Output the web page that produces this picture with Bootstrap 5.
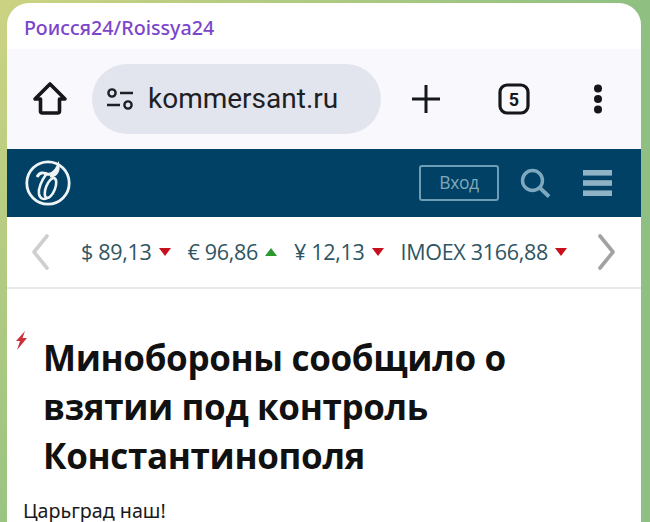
<!DOCTYPE html>
<html lang="en">
<head>
  <meta charset="UTF-8" />
  <title>Роисся24/Roissya24</title>
  <link href="https://cdn.jsdelivr.net/npm/bootstrap@5.3.2/dist/css/bootstrap.min.css" rel="stylesheet" />
  <style>
    html, body { height: 522px; overflow: hidden; }
    body {
      background: linear-gradient(135deg, #ccd382 0%, #8fc082 55%, #8fc083 100%);
      font-family: "Open Sans", sans-serif;
      padding: 3px 9px 0 7px;
    }
    .post-box { background: #fff; border-radius: 22px 22px 0 0; height: 560px; overflow: hidden; }
    .post-author { height: 46px; padding: 0 0 0 17px; font: 500 19.7px/50px "Noto Sans", sans-serif; color: #7c46cc; }
    .browser-bar { height: 100px; background: #f8f8fd; padding: 0 0 0 25px; }
    .url-pill { width: 289px; height: 70px; margin-left: 24px; border-radius: 35px; background: #e2e5ee; padding-left: 14px; gap: 14px; font: 400 28px/1 Roboto, sans-serif; color: #1d2024; }
    .plus-icon { margin-left: 30px; }
    .tabs-icon { margin-left: 57px; }
    .dots-icon { margin-left: 63px; }
    .site-head { height: 68px; background: #004165; padding: 0 29px 0 18px; }
    .login-box { width: 80px; height: 36px; border: 2px solid #6e9db6; border-radius: 3px; color: #7ea8be; font-size: 17.5px; letter-spacing: -.4px; line-height: 1; }
    .search-icon { margin-left: 21px; }
    .burger-icon { margin-left: 33px; }
    .ticker { height: 72px; border-bottom: 2px solid #e9e9e9; padding: 0 25px; color: #2f5563; font-size: 21.5px; letter-spacing: -.3px; white-space: nowrap; }
    .rate-list { gap: 17px; margin-left: 32px; }
    .rate-item { gap: 7px; }
    .arrow-down { width: 0; height: 0; border: 6px solid transparent; border-top: 8px solid #c8101c; border-bottom: 0; }
    .arrow-up { width: 0; height: 0; border: 6px solid transparent; border-bottom: 8px solid #2a9a2e; border-top: 0; }
    .next-arrow { margin-left: 31px; }
    .news-row { padding: 42px 0 0 8px; }
    .news-title { margin: 2px 0 0 15px; width: 530px; font: 700 35px/49px "Open Sans", sans-serif; color: #111; letter-spacing: -.35px; }
    .post-text { margin: 19px 0 0 16px; font: 400 19.7px/24px "Noto Sans", sans-serif; color: #1a1a1a; }
  </style>
</head>
<body>
<div class="post-box">
  <div class="post-author">Роисся24/Roissya24</div>

  <!-- browser toolbar -->
  <div class="browser-bar d-flex align-items-center">
    <svg width="36" height="36" viewBox="0 0 36 36" fill="none" stroke="#15171a" stroke-width="3.6" stroke-linejoin="round"><path d="M18 3 3 18h5.5v12a2 2 0 0 0 2 2h15a2 2 0 0 0 2-2V18H33Z"/></svg>
    <div class="url-pill d-flex align-items-center">
      <svg width="28" height="24" viewBox="0 0 28 24" fill="none" stroke="#1d2024" stroke-width="2.4"><circle cx="6" cy="6" r="3.6"/><path d="M14 6h13M1 18h13"/><circle cx="22" cy="18" r="3.6"/></svg>
      <span>kommersant.ru</span>
    </div>
    <svg class="plus-icon" width="30" height="30" viewBox="0 0 30 30" stroke="#15171a" stroke-width="3"><path d="M15 1v28M1 15h28"/></svg>
    <svg class="tabs-icon" width="32" height="32" viewBox="0 0 32 32"><rect x="2" y="2" width="28" height="28" rx="7" fill="none" stroke="#15171a" stroke-width="3.2"/><text x="16" y="22.5" text-anchor="middle" font-family="Roboto, sans-serif" font-weight="700" font-size="18" fill="#15171a">5</text></svg>
    <svg class="dots-icon" width="10" height="30" viewBox="0 0 10 30" fill="#15171a"><circle cx="5" cy="4.5" r="4"/><circle cx="5" cy="15" r="4"/><circle cx="5" cy="25.5" r="4"/></svg>
  </div>

  <!-- kommersant header -->
  <div class="site-head d-flex align-items-center">
    <svg width="46" height="46" viewBox="0 0 46 46" fill="none" stroke="#eef3f5"><circle cx="23" cy="23" r="21.2" stroke-width="2.8"/><path d="M12 17c3-6 7-4 10-3s8-1 11-8c1 6-3 10-8 10" stroke-width="3"/><path d="M22 13c-5 7-9 15-8 21 1 5 5 6 8 4" stroke-width="2.6"/><ellipse cx="25.500" cy="28" rx="4.500" ry="10.500" transform="rotate(22 25.500 28)" stroke-width="2.600"/></svg>
    <div class="login-box d-flex align-items-center justify-content-center ms-auto">Вход</div>
    <svg class="search-icon" width="30" height="30" viewBox="0 0 30 30" fill="none" stroke="#7ea8be"><circle cx="12.5" cy="12.5" r="10" stroke-width="3.4"/><path d="m20 20 9 8.5" stroke-width="3.8"/></svg>
    <svg class="burger-icon" width="29" height="26" viewBox="0 0 29 26" fill="#8fb2c5"><rect width="29" height="5.6"/><rect y="10.2" width="29" height="5.6"/><rect y="20.4" width="29" height="5.6"/></svg>
  </div>

  <!-- rates -->
  <div class="ticker d-flex align-items-center">
    <svg width="17" height="36" viewBox="0 0 17 36" fill="none" stroke="#cfcfcf" stroke-width="3.6" stroke-linecap="round" stroke-linejoin="round"><path d="M15 2 2 18l13 16"/></svg>
    <div class="rate-list d-flex align-items-center">
      <div class="rate-item d-flex align-items-center"><span>$ 89,13</span><i class="arrow-down"></i></div>
      <div class="rate-item d-flex align-items-center"><span>€ 96,86</span><i class="arrow-up"></i></div>
      <div class="rate-item d-flex align-items-center"><span>¥ 12,13</span><i class="arrow-down"></i></div>
      <div class="rate-item d-flex align-items-center"><span>IMOEX 3166,88</span><i class="arrow-down"></i></div>
    </div>
    <svg class="next-arrow" width="17" height="36" viewBox="0 0 17 36" fill="none" stroke="#a2a2a2" stroke-width="3.6" stroke-linecap="round" stroke-linejoin="round"><path d="m2 2 13 16L2 34"/></svg>
  </div>

  <!-- news -->
  <div class="news-row d-flex align-items-start">
    <svg width="13" height="20" viewBox="0 0 13 20" fill="#c9323c"><path d="M10 0 1 10h4l-3 9 10-12H7.500Z"/></svg>
    <div class="news-title">Минобороны сообщило о взятии под контроль Константинополя</div>
  </div>
  <div class="post-text">Царьград наш!</div>
</div>
<script src="https://cdn.jsdelivr.net/npm/bootstrap@5.3.2/dist/js/bootstrap.bundle.min.js"></script>
</body>
</html>
